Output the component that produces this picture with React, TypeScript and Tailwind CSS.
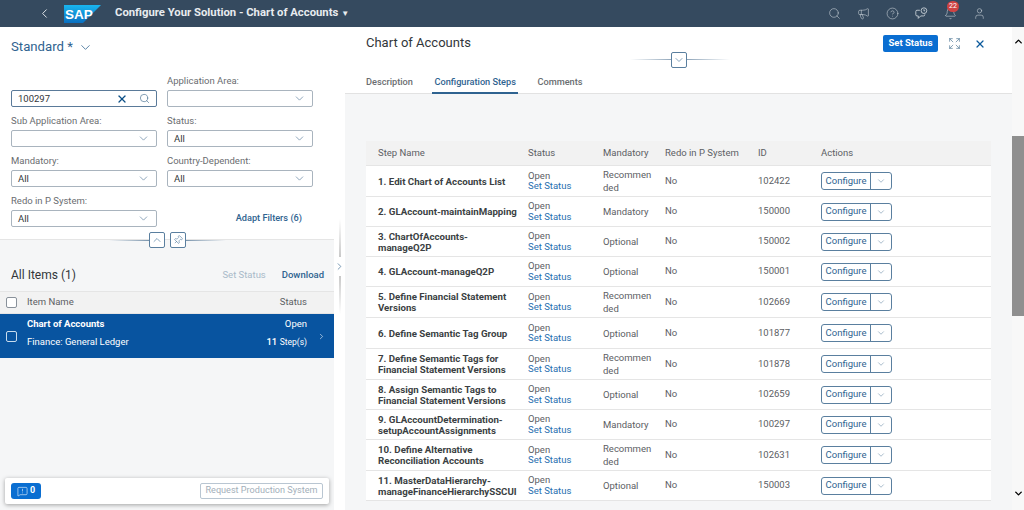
import { Bell, ChevronDown, ChevronLeft, ChevronRight, ChevronUp, CircleHelp, Expand, Megaphone, MessageSquareWarning, Pin, Search, User, X } from "lucide-react";

const steps = [
  { name: ["1. Edit Chart of Accounts List"], mandatory: ["Recommen", "ded"], id: "102422", h: "h-[31px]" },
  { name: ["2. GLAccount-maintainMapping"], mandatory: ["Mandatory"], id: "150000", h: "h-[30px]" },
  { name: ["3. ChartOfAccounts-", "manageQ2P"], mandatory: ["Optional"], id: "150002", h: "h-[30px]" },
  { name: ["4. GLAccount-manageQ2P"], mandatory: ["Optional"], id: "150001", h: "h-[30px]" },
  { name: ["5. Define Financial Statement", "Versions"], mandatory: ["Recommen", "ded"], id: "102669", h: "h-[31px]" },
  { name: ["6. Define Semantic Tag Group"], mandatory: ["Optional"], id: "101877", h: "h-[31px]" },
  { name: ["7. Define Semantic Tags for", "Financial Statement Versions"], mandatory: ["Recommen", "ded"], id: "101878", h: "h-[31px]" },
  { name: ["8. Assign Semantic Tags to", "Financial Statement Versions"], mandatory: ["Optional"], id: "102659", h: "h-[30px]" },
  { name: ["9. GLAccountDetermination-", "setupAccountAssignments"], mandatory: ["Mandatory"], id: "100297", h: "h-[30px]" },
  { name: ["10. Define Alternative", "Reconciliation Accounts"], mandatory: ["Recommen", "ded"], id: "102631", h: "h-[31px]" },
  { name: ["11. MasterDataHierarchy-", "manageFinanceHierarchySSCUI"], mandatory: ["Optional"], id: "150003", h: "h-[30px]" },
];

const filters = [
  { label: "", value: "100297", search: true },
  { label: "Application Area:", value: "" },
  { label: "Sub Application Area:", value: "" },
  { label: "Status:", value: "All" },
  { label: "Mandatory:", value: "All" },
  { label: "Country-Dependent:", value: "All" },
  { label: "Redo in P System:", value: "All" },
];

const Filter = ({ label, value, search }: { label: string; value: string; search?: boolean }) => (
  <div className="flex h-[40px] flex-col justify-end">
    <div className="mb-[3px] text-[9.5px] leading-[12px] text-[#6a6d70]">{label}</div>
    <div className={`flex h-[17px] items-center rounded-[2px] border bg-white pl-[6px] pr-[6px] text-[9.5px] text-[#32363a] ${search ? "border-[#5a7a99]" : "border-[#a9b4be]"}`}>
      <span className="flex-1 pt-[1px]">{value}</span>
      {search ? (
        <>
          <X className="mr-[11px] h-[12px] w-[12px] text-[#0b4f86]" strokeWidth={2.5} />
          <Search className="h-[11px] w-[11px] text-[#4f7696]" strokeWidth={1.5} />
        </>
      ) : (
        <ChevronDown className="h-[13px] w-[13px] text-[#5b7d9c]" strokeWidth={1.25} />
      )}
    </div>
  </div>
);

const ChatClock = () => (
  <svg viewBox="0 0 16 16" className="h-[13px] w-[13px]" fill="none" stroke="currentColor" strokeWidth="1">
    <path d="M6 4H2.500A1.500 1.500 0 0 0 1 5.500v4A1.500 1.500 0 0 0 2.500 11H4v3l3-3h3.500A1.500 1.500 0 0 0 12 9.500V9" />
    <circle cx="11" cy="4.500" r="3.500" />
    <path d="M11 2.800v1.900h1.500" />
  </svg>
);

const SapLogo = () => (
  <svg viewBox="0 0 37 18" className="h-[18px] w-[37px]">
    <defs>
      <linearGradient id="sapBlue" x1="0" y1="0" x2="0" y2="1">
        <stop offset="0" stopColor="#19b5ee" />
        <stop offset="1" stopColor="#0a6fc0" />
      </linearGradient>
    </defs>
    <polygon points="0,0 37,0 19,18 0,18" fill="url(#sapBlue)" />
    <text x="1" y="14" fill="#fff" fontSize="13.500" fontWeight="900" fontFamily="Liberation Sans, sans-serif">SAP</text>
  </svg>
);

export default function App() {
  return (
    <div className="flex h-[510px] w-[1024px] flex-col overflow-hidden bg-white font-['Roboto',sans-serif] text-[#32363a]">
      <header className="flex h-[27px] shrink-0 items-center bg-[#354a5f] text-[#e8ecef]">
        <ChevronLeft className="ml-[37px] h-[15px] w-[15px]" strokeWidth={1.5} />
        <div className="ml-[12px]"><SapLogo /></div>
        <span className="ml-[14px] text-[11.3px] font-bold">Configure Your Solution - Chart of Accounts</span>
        <span className="ml-[3px] mt-[1px] text-[8px]">▼</span>
        <div className="ml-auto mr-[38px] flex items-center gap-[16px] text-[#d5dce2]">
          <Search className="h-[13px] w-[13px]" strokeWidth={1} />
          <Megaphone className="h-[13px] w-[13px]" strokeWidth={1} />
          <CircleHelp className="h-[13px] w-[13px]" strokeWidth={1} />
          <ChatClock />
          <div className="relative">
            <Bell className="h-[13px] w-[13px]" strokeWidth={1} />
            <span className="absolute -top-[6px] left-[3px] flex h-[11px] w-[12px] items-center justify-center rounded-full bg-[#d04343] text-[7px] text-white">22</span>
          </div>
          <User className="h-[13px] w-[13px]" strokeWidth={1} />
        </div>
      </header>

      <div className="flex min-h-0 flex-1">
        {/* filter pane + item list */}
        <aside className="flex w-[334px] shrink-0 flex-col bg-[#f5f6f7]">
          <div className="h-[213px] shrink-0 border-b border-[#e5e5e5] bg-white pl-[11px] pr-[21px]">
            <div className="flex items-center pt-[10px] text-[13.2px] leading-[20px] text-[#2f6390]">
              Standard *
              <ChevronDown className="ml-[5px] h-[15px] w-[15px]" strokeWidth={1.25} />
            </div>
            <div className="mt-[10px] grid grid-cols-[146px_146px] gap-x-[10px]">
              {filters.map((f, i) => (
                <Filter key={i} {...f} />
              ))}
              <div className="flex items-end justify-end pb-[2px] pr-[11px]">
                <span className="text-[9.2px] font-medium text-[#2f6390]">Adapt Filters (6)</span>
              </div>
            </div>
            <div className="ml-[10px] mt-[5px] flex h-[16px] items-center justify-center gap-[5px]">
              <div className="h-px w-[40px] bg-gradient-to-r from-transparent to-[#7b95ad]" />
              <button className="-ml-[5px] flex h-[16px] w-[16px] items-center justify-center rounded-[2px] border border-[#5a7f9f] bg-white">
                <ChevronUp className="h-[12px] w-[12px] text-[#3f6d94]" strokeWidth={1.25} />
              </button>
              <button className="flex h-[16px] w-[16px] items-center justify-center rounded-[2px] border border-[#5a7f9f] bg-white">
                <Pin className="h-[10px] w-[10px] rotate-45 text-[#3f6d94]" strokeWidth={1.25} />
              </button>
              <div className="-ml-[5px] h-px w-[40px] bg-gradient-to-l from-transparent to-[#7b95ad]" />
            </div>
          </div>

          <div className="flex h-[51px] shrink-0 items-center pl-[11px] pr-[10px] pt-[19px]">
            <span className="flex-1 text-[12px]">All Items (1)</span>
            <span className="text-[9.5px] text-[#a9bac9]">Set Status</span>
            <span className="ml-[16px] text-[9.5px] font-medium text-[#2f6390]">Download</span>
          </div>
          <div className="flex h-[23px] shrink-0 items-center border-y border-[#e5e5e5] bg-[#f2f2f2] pl-[6px] pr-[27px] text-[9.500px] text-[#5c6064]">
            <span className="h-[11px] w-[11px] rounded-[2px] border border-[#89919a] bg-white" />
            <span className="ml-[10px] flex-1">Item Name</span>
            <span>Status</span>
          </div>
          <div className="flex h-[44px] shrink-0 items-center bg-[#0854a0] pl-[6px] pr-[8px] text-white">
            <span className="h-[11px] w-[11px] rounded-[2px] border border-[#c8dcee]" />
            <div className="ml-[10px] flex-1 pb-[7px] text-[9.500px]">
              <div className="font-bold leading-[12px]">Chart of Accounts</div>
              <div className="mt-[6px] leading-[12px]">Finance: General Ledger</div>
            </div>
            <div className="pb-[7px] text-right text-[9.500px]">
              <div className="leading-[12px]">Open</div>
              <div className="mt-[6px] leading-[12px]"><b className="font-medium">11</b> <span className="text-[8.500px]">Step(s)</span></div>
            </div>
            <ChevronRight className="ml-[10px] h-[9px] w-[9px]" strokeWidth={1.5} />
          </div>

          <div className="mx-[5px] mb-[6px] mt-auto flex h-[26px] shrink-0 items-center rounded-[2px] bg-white px-[6px] shadow-[0_1px_4px_rgba(0,0,0,0.35)]">
            <button className="flex h-[16px] w-[30px] items-center justify-center gap-[2px] rounded-[3px] bg-[#0a6ed1] text-[9px] font-bold text-white">
              <MessageSquareWarning className="h-[11px] w-[11px]" strokeWidth={1.25} />
              0
            </button>
            <button className="ml-auto h-[16px] w-[123px] whitespace-nowrap rounded-[2px] border border-[#b9c6d2] text-[9.1px] text-[#a3afba]">Request Production System</button>
          </div>
        </aside>

        {/* splitter */}
        <div className="flex w-[11px] shrink-0 flex-col items-center bg-white pt-[192px]">
          <div className="h-[38px] w-[2px] bg-gradient-to-b from-white to-[#c9c9c9]" />
          <ChevronRight className="my-[4px] h-[11px] w-[11px] text-[#3f6d94]" strokeWidth={1.5} />
          <div className="h-[38px] w-[2px] bg-gradient-to-t from-white to-[#c9c9c9]" />
        </div>

        {/* detail pane */}
        <main className="flex min-w-0 flex-1 flex-col bg-[#f5f6f7]">
          <div className="h-[67px] shrink-0 border-b border-[#e2e2e2] bg-white">
            <div className="flex h-[25px] items-end pl-[21px] pr-[26px]">
              <span className="flex-1 text-[13px] leading-[18px]">Chart of Accounts</span>
              <button className="h-[17px] w-[55px] rounded-[2px] bg-[#0a6ed1] text-[9.500px] font-bold text-white">Set Status</button>
              <Expand className="mb-[2px] ml-[10px] h-[13px] w-[13px] text-[#4f7696]" strokeWidth={1.25} />
              <X className="mb-[2px] ml-[13px] h-[12px] w-[12px] text-[#0b5a9c]" strokeWidth={2.5} />
            </div>
            <div className="relative h-0">
              <div className="absolute left-[285px] top-[7px] h-px w-[100px] bg-gradient-to-r from-transparent via-[#7b95ad] to-transparent" />
              <button className="absolute left-[326px] top-0 flex h-[16px] w-[16px] items-center justify-center rounded-[2px] border border-[#5a7f9f] bg-white">
                <ChevronDown className="h-[12px] w-[12px] text-[#3f6d94]" strokeWidth={1.25} />
              </button>
            </div>
            <nav className="mt-[18px] flex h-[24px] items-stretch gap-[19.5px] pl-[21px] text-[9.2px] font-medium text-[#6a6d70]">
              <span className="pt-[5px]">Description</span>
              <span className="border-b-[2px] border-[#2f6390] px-[2px] pt-[5px] text-[#2f6390]">Configuration Steps</span>
              <span className="pt-[5px]">Comments</span>
            </nav>
          </div>

          <div className="ml-[21px] mr-[21px] mt-[47px] bg-white text-[9.500px]">
            <div className="grid h-[25px] grid-cols-[162px_75px_62px_93px_63px_1fr] items-center border-b border-[#e5e5e5] bg-[#f2f2f2] pt-[1px] text-[#5c6064]">
              <span className="pl-[12px]">Step Name</span>
              <span>Status</span>
              <span>Mandatory</span>
              <span>Redo in P System</span>
              <span>ID</span>
              <span>Actions</span>
            </div>
            {steps.map((s) => (
              <div key={s.id} className={`grid grid-cols-[162px_75px_62px_93px_63px_1fr] items-center border-b border-[#e5e5e5] ${s.h}`}>
                <div className="pl-[12px] text-[9.7px] font-bold leading-[11px] text-[#3b3f43]">
                  {s.name.map((n) => (
                    <div key={n} className="whitespace-nowrap">{n}</div>
                  ))}
                </div>
                <div className="leading-[10.500px]">
                  <div className="text-[#5c6064]">Open</div>
                  <div className="text-[#1f6fb0]">Set Status</div>
                </div>
                <div className="leading-[13px] text-[#5c6064]">
                  {s.mandatory.map((m) => (
                    <div key={m}>{m}</div>
                  ))}
                </div>
                <div className="text-[#5c6064]">No</div>
                <div className="text-[#5c6064]">{s.id}</div>
                <div className="flex h-[18px] w-[71px] items-stretch rounded-[3px] border border-[#5a7f9f] bg-white">
                  <span className="flex w-[49px] items-center justify-center border-r border-[#5a7f9f] text-[#2f6390]">Configure</span>
                  <span className="flex flex-1 items-center justify-center">
                    <ChevronDown className="h-[10px] w-[10px] text-[#5a7f9f]" strokeWidth={1.25} />
                  </span>
                </div>
              </div>
            ))}
          </div>
        </main>

        {/* page scrollbar */}
        <div className="relative flex w-[12px] shrink-0 flex-col items-center bg-[#f8f8f8] pt-[109px]">
          <ChevronUp className="absolute top-[9px] h-[11px] w-[11px] text-black" strokeWidth={3} />
          <div className="h-[180px] w-full bg-[#8f8f8f]" />
          <ChevronDown className="absolute bottom-[11px] h-[11px] w-[11px] text-black" strokeWidth={3} />
        </div>
      </div>
    </div>
  );
}
